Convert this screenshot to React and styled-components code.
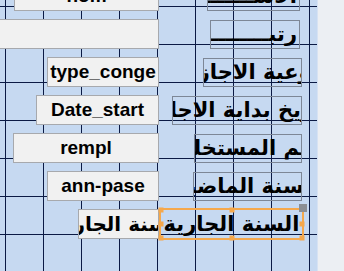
import React from "react";
import styled, { createGlobalStyle } from "styled-components";

const GlobalStyle = createGlobalStyle`
  html, body { margin: 0; padding: 0; }
  body { overflow: hidden; background: #eceff3; }
`;

const Screen = styled.div`
  display: flex;
  width: 344px;
  height: 271px;
  overflow: hidden;
`;

const Canvas = styled.div`
  position: relative;
  width: 317px;
  height: 271px;
  flex: none;
  overflow: hidden;
  background-color: #c6d9f1;
  background-image:
    linear-gradient(to right, #0b1a44 1px, transparent 1px),
    linear-gradient(to bottom, #0b1a44 1px, transparent 1px);
  background-size: 38px 38px;
  background-position: 5px 6px;
  border-right: 1px solid #d6e2f3;
`;

const Side = styled.div`
  flex: 1;
  background: #eceff3;
`;

const Rows = styled.div`
  display: flex;
  flex-direction: column;
  gap: 8px;
  margin-top: -19px;
`;

const Row = styled.div`
  display: flex;
  align-items: center;
  height: 30px;
`;

const LeftCell = styled.div`
  width: 159px;
  flex: none;
  display: flex;
  justify-content: flex-end;
  align-items: center;
  height: 100%;
`;

const RightCell = styled.div`
  width: 146px;
  flex: none;
  display: flex;
  justify-content: flex-end;
  align-items: center;
  height: 100%;
`;

const TextBox = styled.div`
  box-sizing: border-box;
  width: ${(p) => p.$w}px;
  height: 30px;
  flex: none;
  background: #f1f1f1;
  border: 1px solid #a7a9ad;
  display: flex;
  justify-content: center;
  align-items: center;
  overflow: hidden;
  white-space: nowrap;
  font-family: ${(p) => (p.$ar ? '"DejaVu Sans", sans-serif' : '"Liberation Sans", Arial, sans-serif')};
  font-weight: bold;
  font-size: ${(p) => (p.$ar ? 20 : 19)}px;
  color: #000;
  direction: ${(p) => (p.$ar ? "rtl" : "ltr")};
`;

const Label = styled.div`
  position: relative;
  box-sizing: border-box;
  width: ${(p) => p.$w}px;
  height: ${(p) => p.$h}px;
  flex: none;
  margin-right: ${(p) => p.$mr}px;
  border: ${(p) => (p.$sel ? "2px solid #f5a84c" : "1px solid #7d8796")};
  direction: rtl;
  font-family: "DejaVu Sans", sans-serif;
  font-weight: bold;
  font-size: 21px;
  color: #000;
`;

const Clip = styled.div`
  position: absolute;
  inset: 0;
  overflow: hidden;
  white-space: nowrap;
  display: flex;
  justify-content: ${(p) => (p.$start ? "flex-start" : "center")};
  align-items: center;
  padding: 0 2px;
`;

const Handle = styled.span`
  position: absolute;
  width: 5px;
  height: 5px;
  background: #f5a84c;
  transform: translate(-50%, -50%);
`;

const MoveHandle = styled.span`
  position: absolute;
  width: 8px;
  height: 8px;
  background: #8c8f94;
  right: -5px;
  top: -6px;
`;

const rows = [
  { box: "nom", bw: 145, label: "الاســــــــــــــــم", lw: 93, lmr: 5, start: true },
  { box: "", bw: 162, label: "رتبـــــــــــــــــة", lw: 90, lmr: 5, start: true },
  { box: "type_conge", bw: 112, label: "نوعية الاجازة", lw: 99, lmr: 3 },
  { box: "Date_start", bw: 123, label: "تاريخ بداية الاجازة", lw: 130, lmr: 3 },
  { box: "rempl", bw: 146, label: "اسم المستخلف", lw: 108, lmr: 3 },
  { box: "ann-pase", bw: 112, label: "السنة الماضية", lw: 109, lmr: 3 },
  { box: "السنة الجارية", ar: true, bw: 81, label: "السنة الجارية", lw: 145, lmr: 1, sel: true },
];

const handles = [
  [0, 0], [50, 0], [0, 50], [100, 50], [0, 100], [50, 100], [100, 100],
];

export default function App() {
  return (
    <>
      <GlobalStyle />
      <Screen>
        <Canvas>
          <Rows>
            {rows.map((r, i) => (
              <Row key={i}>
                <LeftCell>
                  <TextBox $w={r.bw} $ar={r.ar}>
                    {r.box}
                  </TextBox>
                </LeftCell>
                <RightCell>
                  <Label $w={r.lw} $mr={r.lmr} $sel={r.sel} $h={r.sel ? 32 : 29}>
                    <Clip $start={r.start}>
                      <span>{r.label}</span>
                    </Clip>
                    {r.sel && (
                      <>
                        {handles.map(([x, y], k) => (
                          <Handle key={k} style={{ left: `${x}%`, top: `${y}%` }} />
                        ))}
                        <MoveHandle />
                      </>
                    )}
                  </Label>
                </RightCell>
              </Row>
            ))}
          </Rows>
        </Canvas>
        <Side />
      </Screen>
    </>
  );
}
